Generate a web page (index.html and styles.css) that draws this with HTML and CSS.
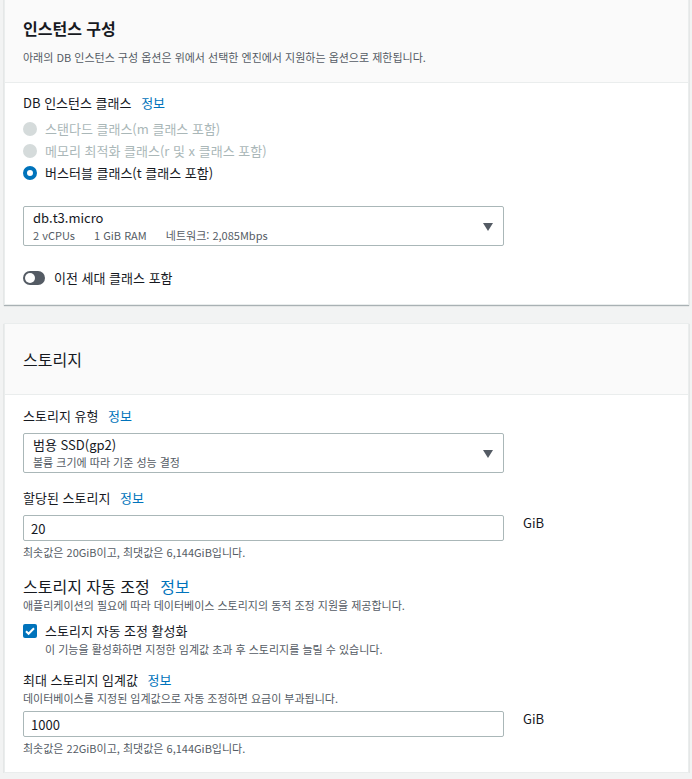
FILE: index.html
```html
<!DOCTYPE html>
<html lang="ko">

<head>
    <meta charset="UTF-8">
    <title>인스턴스 구성</title>
    <link rel="stylesheet" href="styles.css">
</head>

<body>
    <div class="page">

        <!-- 인스턴스 구성 -->
        <section class="card card-first">
            <header class="card-header">
                <h2 class="card-title">인스턴스 구성</h2>
                <p class="card-desc">아래의 DB 인스턴스 구성 옵션은 위에서 선택한 엔진에서 지원하는 옵션으로 제한됩니다.</p>
            </header>
            <div class="card-body">
                <div class="field-label">DB 인스턴스 클래스 <a class="info" href="#">정보</a></div>

                <div class="radio-group">
                    <label class="radio disabled"><span class="radio-dot"></span>스탠다드 클래스(m 클래스 포함)</label>
                    <label class="radio disabled"><span class="radio-dot"></span>메모리 최적화 클래스(r 및 x 클래스 포함)</label>
                    <label class="radio checked"><span class="radio-dot"></span>버스터블 클래스(t 클래스 포함)</label>
                </div>

                <div class="select select-class">
                    <div class="select-text">
                        <div class="select-main">db.t3.micro</div>
                        <div class="select-sub">
                            <span>2 vCPUs</span>
                            <span>1 GiB RAM</span>
                            <span>네트워크: 2,085Mbps</span>
                        </div>
                    </div>
                    <svg class="caret" width="10" height="8" viewBox="0 0 10 8"><path d="M0 0h10L5 8z" fill="#545b64"/></svg>
                </div>

                <div class="toggle-row">
                    <span class="toggle"><span class="toggle-knob"></span></span>
                    이전 세대 클래스 포함
                </div>
            </div>
        </section>

        <!-- 스토리지 -->
        <section class="card">
            <header class="card-header card-header-plain">
                <h2 class="card-title light">스토리지</h2>
            </header>
            <div class="card-body body-storage">
                <div class="field-label">스토리지 유형 <a class="info" href="#">정보</a></div>
                <div class="select select-storage">
                    <div class="select-text">
                        <div class="select-main">범용 SSD(gp2)</div>
                        <div class="select-sub">볼륨 크기에 따라 기준 성능 결정</div>
                    </div>
                    <svg class="caret" width="10" height="8" viewBox="0 0 10 8"><path d="M0 0h10L5 8z" fill="#545b64"/></svg>
                </div>

                <div class="field-label spaced">할당된 스토리지 <a class="info" href="#">정보</a></div>
                <div class="input-row">
                    <input class="text-input" type="text" value="20">
                    <span class="unit">GiB</span>
                </div>
                <div class="hint">최솟값은 20GiB이고, 최댓값은 6,144GiB입니다.</div>

                <div class="section-label">스토리지 자동 조정 <a class="info" href="#">정보</a></div>
                <div class="hint desc">애플리케이션의 필요에 따라 데이터베이스 스토리지의 동적 조정 지원을 제공합니다.</div>

                <div class="check-row">
                    <span class="checkbox">
                        <svg width="14" height="14" viewBox="0 0 14 14"><path d="M3 7.2l2.6 2.6L11 4.2" fill="none" stroke="#fff" stroke-width="2"/></svg>
                    </span>
                    <div>
                        <div class="check-label">스토리지 자동 조정 활성화</div>
                        <div class="hint desc">이 기능을 활성화하면 지정한 임계값 초과 후 스토리지를 늘릴 수 있습니다.</div>
                    </div>
                </div>

                <div class="field-label spaced-2">최대 스토리지 임계값 <a class="info" href="#">정보</a></div>
                <div class="hint desc">데이터베이스를 지정된 임계값으로 자동 조정하면 요금이 부과됩니다.</div>
                <div class="input-row tight">
                    <input class="text-input" type="text" value="1000">
                    <span class="unit">GiB</span>
                </div>
                <div class="hint">최솟값은 22GiB이고, 최댓값은 6,144GiB입니다.</div>
            </div>
        </section>

    </div>
</body>

</html>
```

FILE: styles.css
```css
body {
    font-family: "Noto Sans CJK KR", "Noto Sans", sans-serif;
    background-color: #f2f3f3;
    color: #16191f;
    margin: 0;
    padding: 0;
}

.page {
    padding: 0 3px 0 4px;
}

.card {
    background-color: #fff;
    border: 1px solid #eaeded;
    box-shadow: 0 1px 1px 0 rgba(0, 28, 36, 0.3);
    margin-top: 18px;
}

.card-first {
    margin-top: -1px;
}

.card-header {
    background-color: #fafafa;
    border-bottom: 1px solid #eaeded;
    padding: 16px 18px 17px;
}

.card-header-plain {
    padding: 23px 18px 23px;
}

.card-title {
    margin: 0;
    font-size: 16px;
    line-height: 24px;
    font-weight: 700;
}

.card-title.light {
    font-weight: 400;
}

.card-desc {
    margin: 9px 0 0;
    font-size: 11px;
    line-height: 16px;
    color: #545b64;
}

.card-body {
    padding: 10px 18px 16px;
}

.body-storage {
    padding-top: 11px;
}

.field-label {
    font-size: 13px;
    line-height: 20px;
}

.field-label.spaced {
    margin-top: 15px;
}

.field-label.spaced-2 {
    margin-top: 13px;
}

.info {
    color: #0073bb;
    text-decoration: none;
    margin-left: 6px;
}

.radio-group {
    margin-top: 5px;
}

.radio {
    display: flex;
    align-items: center;
    font-size: 13px;
    line-height: 22px;
}

.radio-dot {
    width: 14px;
    height: 14px;
    border-radius: 50%;
    margin-right: 8px;
    box-sizing: border-box;
}

.radio.disabled {
    color: #aab7b8;
}

.radio.disabled .radio-dot {
    background-color: #d5dbdb;
}

.radio.checked .radio-dot {
    border: 4px solid #0073bb;
    background-color: #fff;
}

.select {
    display: flex;
    align-items: center;
    width: 481px;
    height: 40px;
    box-sizing: border-box;
    border: 1px solid #aab7b8;
    border-radius: 2px;
    padding: 0 10px 0 9px;
}

.select-class {
    margin-top: 22px;
}

.select-storage {
    margin-top: 7px;
}

.select-text {
    flex: 1;
}

.select-main {
    font-size: 13px;
    line-height: 18px;
}

.select-sub {
    font-size: 11px;
    line-height: 16px;
    color: #545b64;
}

.select-class .select-sub span {
    margin-right: 16px;
}

.caret {
    display: block;
    margin-top: 2px;
}

.toggle-row {
    display: flex;
    align-items: center;
    margin-top: 22px;
    font-size: 13px;
    line-height: 20px;
}

.toggle {
    display: inline-flex;
    align-items: center;
    width: 22px;
    height: 14px;
    border-radius: 7px;
    background-color: #545b64;
    padding: 0 2px;
    box-sizing: border-box;
    margin-right: 9px;
}

.toggle-knob {
    width: 10px;
    height: 10px;
    border-radius: 50%;
    background-color: #fff;
}

.input-row {
    display: flex;
    align-items: flex-start;
    margin-top: 7px;
}

.input-row.tight {
    margin-top: 5px;
}

.text-input {
    width: 481px;
    height: 26px;
    box-sizing: border-box;
    border: 1px solid #aab7b8;
    border-radius: 2px;
    padding: 0 7px;
    font-family: inherit;
    font-size: 13px;
    color: #16191f;
    margin: 0;
}

.unit {
    margin-left: 19px;
    font-size: 13px;
    line-height: 16px;
}

.hint {
    font-size: 11px;
    line-height: 16px;
    color: #545b64;
    margin-top: 3px;
}

.hint.desc {
    margin-top: 0;
}

.section-label {
    margin-top: 15px;
    font-size: 16px;
    line-height: 22px;
}

.check-row {
    display: flex;
    align-items: flex-start;
    margin-top: 8px;
}

.checkbox {
    display: block;
    width: 14px;
    height: 14px;
    background-color: #0073bb;
    border-radius: 2px;
    margin: 3px 8px 0 0;
}

.checkbox svg {
    display: block;
}

.check-label {
    font-size: 13px;
    line-height: 20px;
}
```
